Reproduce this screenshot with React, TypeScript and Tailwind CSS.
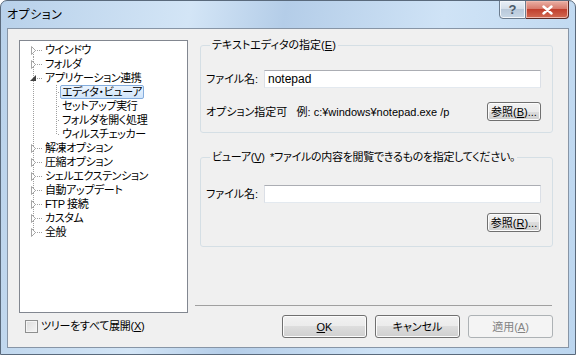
import React from 'react';

const font = "font-['Liberation_Sans','Noto_Sans_CJK_JP',sans-serif] [font-feature-settings:'palt'] text-[11px] leading-[14px] text-black";

type Node = { label: string; level: 0 | 1; exp?: 'closed' | 'open'; selected?: boolean };

const tree: Node[] = [
  { label: 'ウインドウ', level: 0, exp: 'closed' },
  { label: 'フォルダ', level: 0, exp: 'closed' },
  { label: 'アプリケーション連携', level: 0, exp: 'open' },
  { label: 'エディタ・ビューア', level: 1, selected: true },
  { label: 'セットアップ実行', level: 1 },
  { label: 'フォルダを開く処理', level: 1 },
  { label: 'ウィルスチェッカー', level: 1 },
  { label: '解凍オプション', level: 0, exp: 'closed' },
  { label: '圧縮オプション', level: 0, exp: 'closed' },
  { label: 'シェルエクステンション', level: 0, exp: 'closed' },
  { label: '自動アップデート', level: 0, exp: 'closed' },
  { label: 'FTP 接続', level: 0, exp: 'closed' },
  { label: 'カスタム', level: 0, exp: 'closed' },
  { label: '全般', level: 0, exp: 'closed' },
];

const dot = { stroke: '#a0a0a0', strokeDasharray: '1 1' };

const RootGutter = ({ node, first, last }: { node: Node; first: boolean; last: boolean }) => (
  <svg width="22" height="14" className="shrink-0">
    <line x1="12.5" x2="12.5" y1={first ? 7 : 0} y2={last ? 8 : 14} {...dot} />
    {node.level === 0 && <line x1="14" x2="22" y1="7.5" y2="7.5" {...dot} />}
    {node.exp === 'closed' && (
      <polygon points="10.5,3.5 14.5,7.5 10.5,11.5" fill="#fff" stroke="#a6a6a6" />
    )}
    {node.exp === 'open' && <polygon points="15,4 15,10 9,10" fill="#404040" />}
  </svg>
);

const ChildGutter = ({ last }: { last: boolean }) => (
  <svg width="17" height="14" className="shrink-0">
    <line x1="13.5" x2="13.5" y1="0" y2={last ? 8 : 14} {...dot} />
    <line x1="15" x2="17" y1="7.5" y2="7.5" {...dot} />
  </svg>
);

const VistaButton = ({ children, className = '' }: { children: React.ReactNode; className?: string }) => (
  <button
    className={`flex items-center justify-center rounded-[3px] border border-[#707070] bg-[linear-gradient(#f2f2f2,#ebebeb_50%,#dddddd_50%,#cfcfcf)] shadow-[inset_0_0_0_1px_#fcfcfc] ${className}`}
  >
    {children}
  </button>
);

const TextBox = ({ value }: { value?: string }) => (
  <div className="h-[18px] flex-1 border border-[#dbdfe6] border-t-[#abadb3] border-b-[#e3e9ef] bg-white pl-[3px] flex items-center text-[12px]">
    {value}
  </div>
);

export default function App() {
  return (
    <div className={`${font} w-[576px] h-[355px] overflow-hidden rounded-t-[7px] border border-[#5a6a7c] bg-[linear-gradient(100deg,#b8d1ea_0%,#d3e5f6_30%,#b4cde8_45%,#cfe3f6_70%,#bcd6ef_100%)]`}>
      {/* title bar */}
      <div className="relative h-[27px] flex items-center pl-[6px]">
        <span className="text-[12px] tracking-[0.5px]">オプション</span>
        <div className="absolute right-[6px] top-[-1px] flex">
          <div className="w-[27px] h-[19px] rounded-bl-[4px] border border-[#6c7c8e] bg-[linear-gradient(#e9f0f7,#d2dde9_50%,#b9c9da_50%,#c8d7e6)] flex items-center justify-center text-[13px] font-bold text-[#4b5a6a] shadow-[inset_0_0_0_1px_#f2f6fa]">
            ?
          </div>
          <div className="w-[43px] h-[19px] rounded-br-[4px] border border-l-0 border-[#5c2a24] bg-[linear-gradient(#eab0a5,#d67566_50%,#c1402e_50%,#d26a52)] flex items-center justify-center shadow-[inset_0_0_0_1px_#f0b8ad]">
            <svg width="11" height="10" viewBox="0 0 11 10">
              <path d="M1.5 1.5 L9.5 8.5 M9.5 1.5 L1.5 8.5" stroke="#fff" strokeWidth="2.4" strokeLinecap="round" />
            </svg>
          </div>
        </div>
      </div>

      {/* client area */}
      <div className="mx-[6px] h-[320px] border border-[#8795a6] bg-[#f0f0f0] flex">
        {/* left column */}
        <div className="ml-[11px] mt-[11px] w-[169px] flex flex-col">
          <div className="h-[273px] border border-[#828790] bg-white pt-[2px] pl-[1px] tracking-[-0.4px]">
            {tree.map((n, i) => {
              const first = i === 0;
              const last = i === tree.length - 1;
              const lastChild = n.level === 1 && tree[i + 1]?.level !== 1;
              return (
                <div key={n.label} className="flex h-[14px] items-center">
                  <RootGutter node={n} first={first} last={last} />
                  {n.level === 1 && <ChildGutter last={lastChild} />}
                  <span
                    className={
                      n.selected
                        ? 'h-[14px] rounded-[2px] border border-[#84acdd] bg-[linear-gradient(#ebf4fe,#cfe4fa)] px-[1px] leading-[12px] whitespace-nowrap'
                        : 'px-[2px] whitespace-nowrap'
                    }
                  >
                    {n.label}
                  </span>
                </div>
              );
            })}
          </div>
          <div className="mt-[6px] ml-[6px] flex items-center gap-[3px]">
            <div className="w-[13px] h-[13px] border border-[#8e8f8f] bg-[linear-gradient(135deg,#dcdcdc,#f5f5f5)] shadow-[inset_0_0_0_1px_#f4f4f4]" />
            <span className="tracking-[-0.3px]">
              ツリーをすべて展開(<span className="underline">X</span>)
            </span>
          </div>
        </div>

        {/* right column */}
        <div className="ml-[7px] w-[358px] flex flex-col">
          <fieldset className="mt-[10px] ml-[5px] w-[353px] rounded-[3px] border border-[#d5dfe5] pl-[5px] pr-[11px] pb-[11px]">
            <legend className="ml-[4px] px-[2px] leading-[12px] whitespace-nowrap">
              テキストエディタの指定(<span className="underline">E</span>)
            </legend>
            <div className="mt-[19px] flex items-center">
              <span className="w-[58px]">ファイル名:</span>
              <TextBox value="notepad" />
            </div>
            <div className="mt-[14px] flex items-center">
              <span className="flex-1 whitespace-nowrap">オプション指定可&nbsp;&nbsp;&nbsp;例: c:¥windows¥notepad.exe /p</span>
              <VistaButton className="w-[54px] h-[19px]">
                参照(<span className="underline">B</span>)...
              </VistaButton>
            </div>
          </fieldset>

          <fieldset className="mt-[18px] ml-[5px] w-[353px] rounded-[3px] border border-[#d5dfe5] pl-[5px] pr-[11px] pb-[14px]">
            <legend className="ml-[4px] px-[2px] leading-[12px] whitespace-nowrap tracking-[-0.3px]">
              ビューア(<span className="underline">V</span>)&nbsp;&nbsp;*ファイルの内容を閲覧できるものを指定してください。
            </legend>
            <div className="mt-[22px] flex items-center">
              <span className="w-[58px]">ファイル名:</span>
              <TextBox />
            </div>
            <div className="mt-[10px] flex justify-end">
              <VistaButton className="w-[54px] h-[19px]">
                参照(<span className="underline">R</span>)...
              </VistaButton>
            </div>
          </fieldset>

          <div className="mt-[58px] h-px w-[357px] bg-[#a0a0a0]" />

          <div className="mt-[9px] flex justify-end gap-[8px]">
            <VistaButton className="w-[85px] h-[23px] border-[#3c7fb1] shadow-[inset_0_0_0_1px_#a8e0f8]">
              <span className="underline">O</span>K
            </VistaButton>
            <VistaButton className="w-[85px] h-[23px]">キャンセル</VistaButton>
            <button className="w-[85px] h-[23px] rounded-[3px] border border-[#adb2b5] bg-[#f4f4f4] text-[#838383]">
              適用(<span className="underline">A</span>)
            </button>
          </div>
        </div>
      </div>
    </div>
  );
}
